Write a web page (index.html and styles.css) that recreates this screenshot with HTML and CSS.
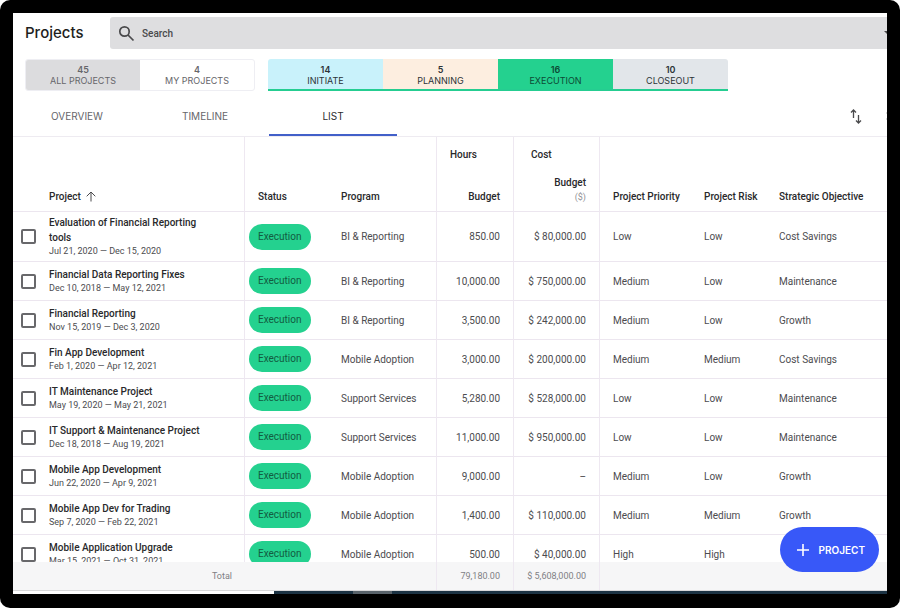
FILE: index.html
```html
<!DOCTYPE html>
<html lang="en">
<head>
    <meta charset="UTF-8">
    <meta name="viewport" content="width=device-width, initial-scale=1.0">
    <title>Projects</title>
    <link rel="stylesheet" href="styles.css">
</head>
<body>

    <div class="frame">
        <div class="screen">

            <header class="top-bar">
                <h1>Projects</h1>
                <div class="search">
                    <svg class="search-icon" viewBox="0 0 17 17" aria-hidden="true"><circle cx="6.5" cy="6.5" r="4.7"/><path d="M10 10l5.5 5.5"/></svg>
                    <input type="text" placeholder="Search" aria-label="Search">
                    <button class="search-options" aria-label="Search options">
                        <svg viewBox="0 0 10 5" aria-hidden="true"><path d="M0 0h10L5 5z"/></svg>
                    </button>
                </div>
            </header>

            <div class="filters">
                <div class="filter-group owner">
                    <button class="tile active"><b>45</b>ALL PROJECTS</button>
                    <button class="tile"><b>4</b>MY PROJECTS</button>
                </div>
                <div class="filter-group stages">
                    <button class="tile initiate"><b>14</b>INITIATE</button>
                    <button class="tile planning"><b>5</b>PLANNING</button>
                    <button class="tile execution"><b>16</b>EXECUTION</button>
                    <button class="tile closeout"><b>10</b>CLOSEOUT</button>
                </div>
            </div>

            <nav class="tabs">
                <a href="#overview">OVERVIEW</a>
                <a href="#timeline">TIMELINE</a>
                <a href="#list" class="active">LIST</a>
                <div class="tools">
                    <button class="sort" aria-label="Sort">
                        <svg viewBox="0 0 12 15" aria-hidden="true"><path d="M3.500 9V1M1 3.500L3.500 1L6 3.500M8.500 6v8M6 11.500L8.500 14L11 11.500"/></svg>
                    </button>
                    <button class="more" aria-label="More">
                        <svg viewBox="0 0 4 10" aria-hidden="true"><circle cx="2" cy="2" r="1.300"/><circle cx="2" cy="8" r="1.300"/></svg>
                    </button>
                </div>
            </nav>

            <div class="table-container">
                <table>
                    <colgroup>
                        <col class="col-check">
                        <col class="col-project">
                        <col class="col-status">
                        <col class="col-program">
                        <col class="col-hours">
                        <col class="col-cost">
                        <col class="col-priority">
                        <col class="col-risk">
                        <col>
                    </colgroup>
                    <thead>
                        <tr class="groups">
                            <th colspan="2" class="line"></th>
                            <th colspan="2" class="line"></th>
                            <th class="line">Hours</th>
                            <th class="line cost">Cost</th>
                            <th colspan="3"></th>
                        </tr>
                        <tr class="names">
                            <th></th>
                            <th class="project line">Project <svg class="asc" viewBox="0 0 10 11" aria-hidden="true"><path d="M5 10.500V1M.7 5.300L5 1l4.300 4.300"/></svg></th>
                            <th>Status</th>
                            <th class="line">Program</th>
                            <th class="num line">Budget</th>
                            <th class="num line">Budget<small>($)</small></th>
                            <th>Project Priority</th>
                            <th>Project Risk</th>
                            <th>Strategic Objective</th>
                        </tr>
                    </thead>
                    <tbody>
                        <tr>
                            <td class="check"><input type="checkbox" id="p1"></td>
                            <td class="project line"><label for="p1">Evaluation of Financial Reporting tools</label><time>Jul 21, 2020 — Dec 15, 2020</time></td>
                            <td class="status"><span>Execution</span></td>
                            <td class="line">BI &amp; Reporting</td>
                            <td class="num line">850.00</td>
                            <td class="num line">$ 80,000.00</td>
                            <td>Low</td>
                            <td>Low</td>
                            <td>Cost Savings</td>
                        </tr>
                        <tr>
                            <td class="check"><input type="checkbox" id="p2"></td>
                            <td class="project line"><label for="p2">Financial Data Reporting Fixes</label><time>Dec 10, 2018 — May 12, 2021</time></td>
                            <td class="status"><span>Execution</span></td>
                            <td class="line">BI &amp; Reporting</td>
                            <td class="num line">10,000.00</td>
                            <td class="num line">$ 750,000.00</td>
                            <td>Medium</td>
                            <td>Low</td>
                            <td>Maintenance</td>
                        </tr>
                        <tr>
                            <td class="check"><input type="checkbox" id="p3"></td>
                            <td class="project line"><label for="p3">Financial Reporting</label><time>Nov 15, 2019 — Dec 3, 2020</time></td>
                            <td class="status"><span>Execution</span></td>
                            <td class="line">BI &amp; Reporting</td>
                            <td class="num line">3,500.00</td>
                            <td class="num line">$ 242,000.00</td>
                            <td>Medium</td>
                            <td>Low</td>
                            <td>Growth</td>
                        </tr>
                        <tr>
                            <td class="check"><input type="checkbox" id="p4"></td>
                            <td class="project line"><label for="p4">Fin App Development</label><time>Feb 1, 2020 — Apr 12, 2021</time></td>
                            <td class="status"><span>Execution</span></td>
                            <td class="line">Mobile Adoption</td>
                            <td class="num line">3,000.00</td>
                            <td class="num line">$ 200,000.00</td>
                            <td>Medium</td>
                            <td>Medium</td>
                            <td>Cost Savings</td>
                        </tr>
                        <tr>
                            <td class="check"><input type="checkbox" id="p5"></td>
                            <td class="project line"><label for="p5">IT Maintenance Project</label><time>May 19, 2020 — May 21, 2021</time></td>
                            <td class="status"><span>Execution</span></td>
                            <td class="line">Support Services</td>
                            <td class="num line">5,280.00</td>
                            <td class="num line">$ 528,000.00</td>
                            <td>Low</td>
                            <td>Low</td>
                            <td>Maintenance</td>
                        </tr>
                        <tr>
                            <td class="check"><input type="checkbox" id="p6"></td>
                            <td class="project line"><label for="p6">IT Support &amp; Maintenance Project</label><time>Dec 18, 2018 — Aug 19, 2021</time></td>
                            <td class="status"><span>Execution</span></td>
                            <td class="line">Support Services</td>
                            <td class="num line">11,000.00</td>
                            <td class="num line">$ 950,000.00</td>
                            <td>Low</td>
                            <td>Low</td>
                            <td>Maintenance</td>
                        </tr>
                        <tr>
                            <td class="check"><input type="checkbox" id="p7"></td>
                            <td class="project line"><label for="p7">Mobile App Development</label><time>Jun 22, 2020 — Apr 9, 2021</time></td>
                            <td class="status"><span>Execution</span></td>
                            <td class="line">Mobile Adoption</td>
                            <td class="num line">9,000.00</td>
                            <td class="num line">–</td>
                            <td>Medium</td>
                            <td>Low</td>
                            <td>Growth</td>
                        </tr>
                        <tr>
                            <td class="check"><input type="checkbox" id="p8"></td>
                            <td class="project line"><label for="p8">Mobile App Dev for Trading</label><time>Sep 7, 2020 — Feb 22, 2021</time></td>
                            <td class="status"><span>Execution</span></td>
                            <td class="line">Mobile Adoption</td>
                            <td class="num line">1,400.00</td>
                            <td class="num line">$ 110,000.00</td>
                            <td>Medium</td>
                            <td>Medium</td>
                            <td>Growth</td>
                        </tr>
                        <tr>
                            <td class="check"><input type="checkbox" id="p9"></td>
                            <td class="project line"><label for="p9">Mobile Application Upgrade</label><time>Mar 15, 2021 — Oct 31, 2021</time></td>
                            <td class="status"><span>Execution</span></td>
                            <td class="line">Mobile Adoption</td>
                            <td class="num line">500.00</td>
                            <td class="num line">$ 40,000.00</td>
                            <td>High</td>
                            <td>High</td>
                            <td></td>
                        </tr>
                    </tbody>
                    <tfoot>
                        <tr>
                            <td colspan="2" class="num">Total</td>
                            <td colspan="2" class="line"></td>
                            <td class="num line">79,180.00</td>
                            <td class="num line">$ 5,608,000.00</td>
                            <td colspan="3"></td>
                        </tr>
                    </tfoot>
                </table>
            </div>

            <div class="scroll-strip"><span></span></div>

            <button class="add-project">
                <svg viewBox="0 0 12 12" aria-hidden="true"><path d="M6 0v12M0 6h12"/></svg>
                PROJECT
            </button>
        </div>
    </div>

</body>
</html>
```
FILE: styles.css
```css
* {
    box-sizing: border-box;
}
body {
    margin: 0;
    background-color: #fff;
    font-family: Roboto, Arial, sans-serif;
    font-size: 10px;
    color: #4c4c4f;
}
button {
    border: 0;
    padding: 0;
    background: none;
    font-family: Inter, sans-serif;
    color: inherit;
    cursor: pointer;
}
svg {
    display: block;
    fill: none;
    stroke: #4a4a4c;
}

/* Black device frame around the app */
.frame {
    height: 100vh;
    padding: 13px 13px 14px;
    background-color: #000;
    border-radius: 10px;
}
.screen {
    position: relative;
    display: flex;
    flex-direction: column;
    height: 100%;
    overflow: hidden;
    background-color: #fff;
}

/* Title and search */
.top-bar {
    display: flex;
    padding: 4px 0 0 12px;
}
h1 {
    width: 85px;
    margin: 0;
    font: 500 15px/32px Inter, sans-serif;
    color: #1e1e20;
}
.search {
    flex: 1;
    display: flex;
    align-items: center;
    height: 32px;
    padding-left: 8px;
    overflow: hidden;
    background-color: #dedee0;
    border-radius: 3px 0 0 3px;
}
.search-icon {
    width: 17px;
    height: 17px;
    stroke-width: 1.7;
}
.search input {
    flex: 1;
    height: 30px;
    padding: 0 7px;
    border: 0;
    outline: 0;
    background: none;
    font: 500 10px Roboto, sans-serif;
}
.search input::placeholder {
    color: #4a4a4c;
}
.search-options {
    margin-right: -7px;
}
.search-options svg {
    width: 10px;
    height: 5px;
    fill: #4a4a4c;
    stroke: none;
}

/* Filter tiles */
.filters {
    display: flex;
    gap: 13px;
    padding: 10px 12px 0;
}
.filter-group {
    display: flex;
    height: 32px;
    overflow: hidden;
    border-radius: 3px;
}
.owner {
    border: 1px solid #eeeef3;
}
.stages {
    border-bottom: 2px solid #25cd91;
    border-radius: 3px 3px 0 0;
}
.tile {
    width: 115px;
    font-size: 9px;
    line-height: 11px;
    color: #66666a;
}
.owner .tile {
    width: 114px;
}
.tile b {
    display: block;
    font-weight: 600;
}
.tile.active {
    background-color: #dcdcde;
}
.stages .tile {
    padding-top: 2px;
    color: #2c3336;
}
.tile.initiate {
    background-color: #c9f2fb;
}
.tile.planning {
    background-color: #fdeee0;
}
.stages .tile.execution {
    background-color: #24d18f;
    color: #0d4a35;
}
.tile.closeout {
    background-color: #e2e6ea;
}

/* Tabs */
.tabs {
    display: flex;
    height: 46px;
    border-bottom: 1px solid #eeebf1;
}
.tabs a {
    width: 128px;
    padding-top: 4px;
    border-bottom: 2px solid transparent;
    font: 10px/42px Inter, sans-serif;
    text-align: center;
    text-decoration: none;
    color: #66666a;
}
.tabs a.active {
    border-color: #4260c9;
    color: #2c2c2e;
}
.tools {
    display: flex;
    gap: 24px;
    margin-left: auto;
    margin-right: -3px;
    padding-top: 5px;
}
.sort svg {
    width: 12px;
    height: 15px;
    stroke-width: 1.3;
}
.more svg {
    width: 4px;
    height: 10px;
    fill: #4a4a4c;
    stroke: none;
}

/* Project table */
.table-container {
    flex: 1;
    min-height: 0;
    overflow: auto;
    scrollbar-width: none;
}
table {
    width: 100%;
    table-layout: fixed;
    border-spacing: 0;
}
.col-check { width: 36px; }
.col-project { width: 196px; }
.col-status { width: 83px; }
.col-program { width: 109px; }
.col-hours { width: 77px; }
.col-cost { width: 86px; }
.col-priority { width: 91px; }
.col-risk { width: 75px; }

th, td {
    height: 39px;
    padding: 3px 0 3px 13px;
    border-bottom: 1px solid #ece6ef;
    text-align: left;
    white-space: nowrap;
}
th {
    font-weight: 500;
    color: #29292b;
}
.line {
    border-right: 1px solid #eee8f1;
}
.num {
    padding-left: 0;
    padding-right: 13px;
    text-align: right;
}
.groups th {
    height: 34px;
    border-bottom: 0;
}
.groups .cost {
    padding-left: 17px;
}
.names th {
    height: 41px;
    padding-bottom: 7px;
    line-height: 14px;
    vertical-align: bottom;
}
.names small {
    display: block;
    font-size: 9px;
    font-weight: 400;
    color: #919195;
}
.asc {
    display: inline-block;
    width: 10px;
    height: 11px;
    margin-left: 3px;
    vertical-align: -2px;
}
th.project, td.project {
    padding-left: 0;
    padding-right: 34px;
    white-space: normal;
}
.project label {
    display: block;
    font-weight: 500;
    line-height: 15px;
    color: #29292b;
}
.project time {
    display: block;
    font-size: 9px;
    line-height: 13px;
}
td.check {
    padding-left: 8px;
}
.check input {
    appearance: none;
    display: block;
    width: 15px;
    height: 15px;
    margin: 0;
    border: 2px solid #68686b;
    border-radius: 2px;
}
.check input:checked {
    background-color: #3858f5;
}
td.status {
    padding-left: 4px;
}
.status span {
    display: inline-block;
    padding: 0 9px;
    background-color: #24d18f;
    border-radius: 13px;
    line-height: 26px;
    vertical-align: middle;
    color: #125c41;
}
tfoot td {
    position: sticky;
    bottom: 0;
    height: 28px;
    background-color: #f6f6f7;
    border-bottom: 0;
    font-size: 9px;
    color: #808084;
}

/* Strip under the table */
.scroll-strip {
    height: 4px;
    padding-left: 340px;
    border-top: 1px solid #d8d8da;
    background: linear-gradient(to right, #fff 261px, #1c3344 261px);
}
.scroll-strip span {
    display: block;
    width: 39px;
    height: 3px;
    background-color: #59636b;
}

.add-project {
    position: absolute;
    right: 8px;
    bottom: 22px;
    display: flex;
    align-items: center;
    gap: 10px;
    height: 45px;
    padding: 0 14px 0 17px;
    border-radius: 23px;
    background-color: #3858f8;
    font-size: 10px;
    font-weight: 600;
    color: #fff;
}
.add-project svg {
    width: 12px;
    height: 12px;
    stroke: #fff;
    stroke-width: 1.6;
}
```
